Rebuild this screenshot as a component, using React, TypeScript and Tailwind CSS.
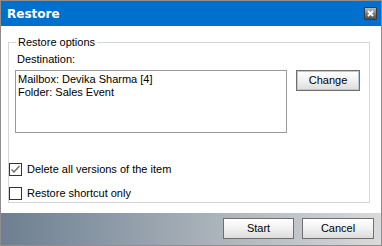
import React from 'react';

const font = { fontFamily: '"Liberation Sans", Arial, sans-serif' };

function Checkbox({ checked }: { checked?: boolean }) {
  return (
    <span className="relative flex h-[13px] w-[13px] shrink-0 items-center justify-center border border-[#333333] bg-white">
      {checked && (
        <svg width="11" height="11" viewBox="0 0 11 11" className="absolute left-0 top-0">
          <path d="M1.5 5.5 L4 8 L9.5 2" fill="none" stroke="#6b6b6b" strokeWidth="1.4" />
        </svg>
      )}
    </span>
  );
}

function WinButton({ label, className }: { label: string; className?: string }) {
  return (
    <button
      className={`flex items-center justify-center border border-[#6f6f6f] bg-gradient-to-b from-white via-[#f1f1f1] to-[#dcdcdc] text-[11px] text-black ${className ?? ''}`}
    >
      {label}
    </button>
  );
}

export default function App() {
  return (
    <div className="flex h-[246px] w-[382px] flex-col border border-[#8e8e8e] bg-white" style={font}>
      {/* Title bar */}
      <div className="flex h-[25px] shrink-0 items-center justify-between bg-[#0070cf] pl-[6px] pr-[4px]">
        <span className="text-[12px] font-bold text-white" style={{ fontFamily: '"DejaVu Sans", Verdana, sans-serif' }}>
          Restore
        </span>
        <span className="flex h-[13px] w-[13px] items-center justify-center rounded-[1px] border border-[#3a3a3a] bg-gradient-to-b from-[#b9b9b9] to-[#4e4e4e]">
          <svg width="7" height="7" viewBox="0 0 7 7">
            <path d="M1 1 L6 6 M6 1 L1 6" stroke="white" strokeWidth="1.8" />
          </svg>
        </span>
      </div>

      {/* Body */}
      <div className="flex-1 pl-[7px] pr-[11px] pt-[10px]">
        <fieldset className="h-[167px] border border-[#d6d6d6] px-0 pb-0">
          <legend className="ml-[7px] px-[2px] text-[11px] leading-[13px] text-black">Restore options</legend>
          <div className="pl-[8px] pt-[4px] text-[11px] leading-[13px] text-black">Destination:</div>
          <div className="flex gap-[9px] pl-[6px] pt-[4px]">
            <div className="h-[63px] w-[272px] border border-[#9a9a9a] px-[2px] pt-[2px] text-[11px] leading-[13px] text-black">
              <div>Mailbox: Devika Sharma [4]</div>
              <div>Folder: Sales Event</div>
            </div>
            <WinButton label="Change" className="h-[21px] w-[64px] border-[#4d5a6b] shadow-[inset_0_0_0_1px_#b6c8e6]" />
          </div>
          <div className="mt-[30px] flex flex-col gap-[11px] text-[11px] leading-[13px] text-black">
            <label className="flex items-center gap-[5px]">
              <Checkbox checked />
              <span>Delete all versions of the item</span>
            </label>
            <label className="flex items-center gap-[5px]">
              <Checkbox />
              <span>Restore shortcut only</span>
            </label>
          </div>
        </fieldset>
      </div>

      {/* Footer */}
      <div className="flex h-[32px] shrink-0 items-start justify-end gap-[8px] bg-gradient-to-r from-[#6d7f91] via-[#a4adb6] to-[#d9dadb] pr-[7px] pt-[5px]">
        <WinButton label="Start" className="h-[21px] w-[71px]" />
        <WinButton label="Cancel" className="h-[21px] w-[72px]" />
      </div>
    </div>
  );
}
